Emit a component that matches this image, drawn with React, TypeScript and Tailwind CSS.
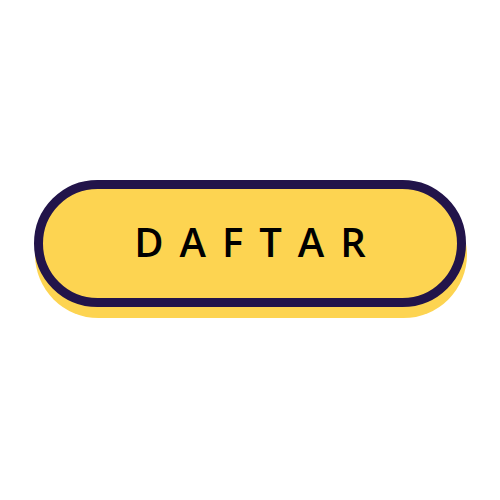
function App() {
    return (
        <div className="w-[500px] h-[500px] bg-white pt-[180px] pl-[34px]">
            <a
                href=""
                className="flex items-center justify-center w-[432px] h-[127px] rounded-full border-[9px] border-[#22144a] bg-[#fdd451] shadow-[1px_11px_0_0_#fdd451]"
            >
                <span
                    className="text-[40px] font-semibold leading-none text-black tracking-[16px] pl-[16px] pb-[4px]"
                    style={{ fontFamily: '"Open Sans", sans-serif' }}
                >
                    DAFTAR
                </span>
            </a>
        </div>
    )
}

export default App;
